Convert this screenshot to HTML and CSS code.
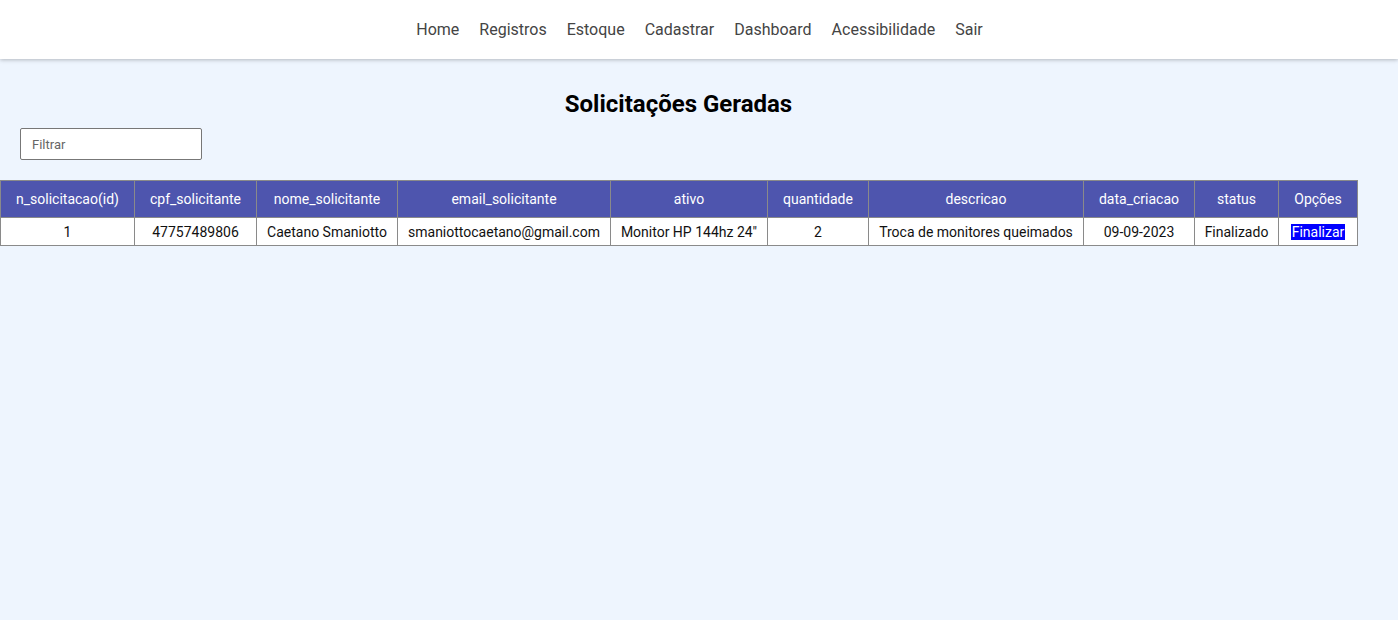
FILE: index.html
```html
<!DOCTYPE html>
<html lang="pt-BR">
<head>
<meta charset="utf-8">
<title>Solicitações Geradas</title>
<link rel="stylesheet" href="styles.css">
</head>
<body>
<header class="topbar">
  <nav class="nav">
    <a href="#">Home</a>
    <a href="#">Registros</a>
    <a href="#">Estoque</a>
    <a href="#">Cadastrar</a>
    <a href="#">Dashboard</a>
    <a href="#">Acessibilidade</a>
    <a href="#">Sair</a>
  </nav>
</header>
<main class="content">
  <h1 class="title">Solicitações Geradas</h1>
  <div class="filter-row">
    <input class="filter" type="text" placeholder="Filtrar">
  </div>
  <table class="grid">
    <colgroup>
      <col class="c1"><col class="c2"><col class="c3"><col class="c4"><col class="c5">
      <col class="c6"><col class="c7"><col class="c8"><col class="c9"><col class="c10">
    </colgroup>
    <thead>
      <tr>
        <th>n_solicitacao(id)</th>
        <th>cpf_solicitante</th>
        <th>nome_solicitante</th>
        <th>email_solicitante</th>
        <th>ativo</th>
        <th>quantidade</th>
        <th>descricao</th>
        <th>data_criacao</th>
        <th>status</th>
        <th>Opções</th>
      </tr>
    </thead>
    <tbody>
      <tr>
        <td>1</td>
        <td>47757489806</td>
        <td>Caetano Smaniotto</td>
        <td>smaniottocaetano@gmail.com</td>
        <td>Monitor HP 144hz 24"</td>
        <td>2</td>
        <td>Troca de monitores queimados</td>
        <td>09-09-2023</td>
        <td>Finalizado</td>
        <td><button class="finalizar" type="button">Finalizar</button></td>
      </tr>
    </tbody>
  </table>
</main>
</body>
</html>
```

FILE: styles.css
```css
* { box-sizing: border-box; }
html, body { margin: 0; padding: 0; }
body {
  background: #eef5fe;
  font-family: Roboto, "Noto Sans", sans-serif;
  color: #111;
  min-height: 620px;
}
.topbar {
  background: #fff;
  height: 59px;
  box-shadow: 0 1px 4px rgba(0,0,0,0.25);
  display: flex;
  align-items: center;
  justify-content: center;
}
.nav {
  display: flex;
  gap: 20px;
  padding-left: 1px;
}
.nav a {
  color: #444;
  text-decoration: none;
  font-size: 16px;
  line-height: 20px;
}
.content {
  width: 1357px;
  padding-top: 31px;
}
.title {
  margin: 0;
  text-align: center;
  font-size: 24px;
  line-height: 28px;
  font-weight: 700;
  color: #000;
}
.filter-row {
  padding: 10px 0 0 20px;
}
.filter {
  width: 182px;
  height: 32px;
  border: 1px solid #777;
  border-radius: 2px;
  background: #fff;
  padding: 0 11px;
  font-family: Roboto, sans-serif;
  font-size: 13px;
  color: #333;
}
.filter::placeholder { color: #666; }
.grid {
  margin-top: 20px;
  border-collapse: collapse;
  table-layout: fixed;
  width: 1357px;
  font-size: 14px;
}
.c1 { width: 134px; }
.c2 { width: 122px; }
.c3 { width: 141px; }
.c4 { width: 213px; }
.c5 { width: 157px; }
.c6 { width: 101px; }
.c7 { width: 215px; }
.c8 { width: 111px; }
.c9 { width: 84px; }
.c10 { width: 79px; }
.grid th, .grid td {
  border: 1px solid #8a8a8a;
  text-align: center;
  padding: 0;
  white-space: nowrap;
}
.grid th {
  background: #4e55ae;
  color: #fff;
  font-weight: 400;
  height: 37px;
}
.grid td {
  background: #fff;
  color: #111;
  height: 28px;
}
.finalizar {
  border: none;
  padding: 0 1px;
  margin: 0;
  background: #0000ff;
  color: #fff;
  font-family: Roboto, sans-serif;
  font-size: 14px;
  line-height: 16px;
  cursor: pointer;
}
```
